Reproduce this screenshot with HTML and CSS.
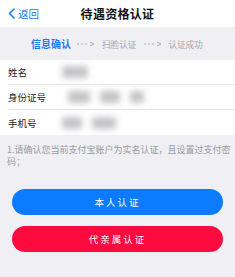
FILE: index.html
```html
<!DOCTYPE html>
<html lang="zh">
<head>
<meta charset="utf-8">
<link rel="stylesheet" href="styles.css">
</head>
<body>
<div class="page">
  <header class="nav">
    <a class="back">
      <svg class="chev" width="7" height="11" viewBox="0 0 7 11"><path d="M6 1 L1.5 5.5 L6 10" fill="none" stroke="#1a7cf5" stroke-width="1.6" stroke-linecap="round" stroke-linejoin="round"/></svg>
      <span>返回</span>
    </a>
    <div class="title">待遇资格认证</div>
  </header>
  <div class="steps">
    <span class="step active">信息确认</span>
    <svg class="arrow" width="19" height="6" viewBox="0 0 19 6"><circle cx="1" cy="3" r="0.8"/><circle cx="5" cy="3" r="0.8"/><circle cx="9" cy="3" r="0.8"/><path d="M13 1 L17 3 L13 5" fill="none" stroke="#a5a5aa" stroke-width="0.9"/></svg>
    <span class="step">扫脸认证</span>
    <svg class="arrow a2" width="19" height="6" viewBox="0 0 19 6"><circle cx="1" cy="3" r="0.8"/><circle cx="5" cy="3" r="0.8"/><circle cx="9" cy="3" r="0.8"/><path d="M13 1 L17 3 L13 5" fill="none" stroke="#a5a5aa" stroke-width="0.9"/></svg>
    <span class="step">认证成功</span>
  </div>
  <div class="form">
    <div class="row"><span class="label">姓名</span><span class="val"><i class="blob b1"></i></span></div>
    <div class="row"><span class="label">身份证号</span><span class="val id"><i class="blob b2"></i><i class="blob b3"></i><i class="blob b4"></i></span></div>
    <div class="row last"><span class="label">手机号</span><span class="val"><i class="blob b5"></i><i class="blob b6"></i></span></div>
  </div>
  <p class="note">1.请确认您当前支付宝账户为实名认证，且设置过支付密码；</p>
  <div class="buttons">
    <button class="btn blue">本人认证</button>
    <button class="btn red">代亲属认证</button>
  </div>
</div>
</body>
</html>
```
FILE: styles.css
```css
* { box-sizing: border-box; }
html, body { margin: 0; padding: 0; }
body {
  background: #efeff4;
  font-family: "Noto Sans CJK SC", "Noto Sans", sans-serif;
  width: 235px;
  height: 277px;
  overflow: hidden;
}
.nav {
  height: 27px;
  background: #fff;
  position: relative;
  display: flex;
  align-items: center;
  justify-content: center;
}
.back {
  position: absolute;
  left: 8px;
  top: 0;
  height: 27px;
  display: flex;
  align-items: center;
  gap: 3px;
  color: #1a7cf5;
  font-size: 10.5px;
}
.title {
  font-size: 12px;
  font-weight: 700;
  color: #111;
  letter-spacing: 0.3px;
}
.steps {
  height: 33px;
  display: flex;
  align-items: center;
  padding-left: 31px;
  font-size: 8.6px;
  color: #a5a5aa;
}
.step.active {
  color: #1a7cf5;
  font-weight: 700;
  font-size: 10px;
}
.arrow {
  fill: #a5a5aa;
  margin: 1px 6px 0 6px;
}
.arrow.a2 { margin: 1px 5px 0 8px; }
.form {
  background: #fff;
  padding-left: 8px;
}
.row {
  height: 25px;
  display: flex;
  align-items: center;
  border-bottom: 1px solid #e6e6ea;
  font-size: 9.5px;
  color: #222;
}
.row.last { border-bottom: none; }
.label { width: 54px; }
.val { display: flex; gap: 10px; align-items: center; }
.val.id { margin-left: 6px; }
.blob {
  display: block;
  height: 12px;
  background: #c4c4c8;
  filter: blur(3px);
  border-radius: 3px;
}
.b1 { width: 26px; }
.b2 { width: 22px; }
.b3 { width: 20px; }
.b4 { width: 14px; }
.b5 { width: 20px; }
.b6 { width: 24px; }
.note {
  margin: 0;
  padding: 9px 1px 0 7px;
  font-size: 9px;
  line-height: 12px;
  color: #9a9a9f;
}
.buttons {
  padding: 21px 12px 0 12px;
  display: flex;
  flex-direction: column;
  gap: 11px;
}
.btn {
  height: 26px;
  border: none;
  border-radius: 13px;
  color: #fff;
  font-family: inherit;
  font-size: 9.5px;
  letter-spacing: 2px;
  padding: 0;
}
.blue { background: #0b7cff; }
.red { background: #ff0a3f; }
```
